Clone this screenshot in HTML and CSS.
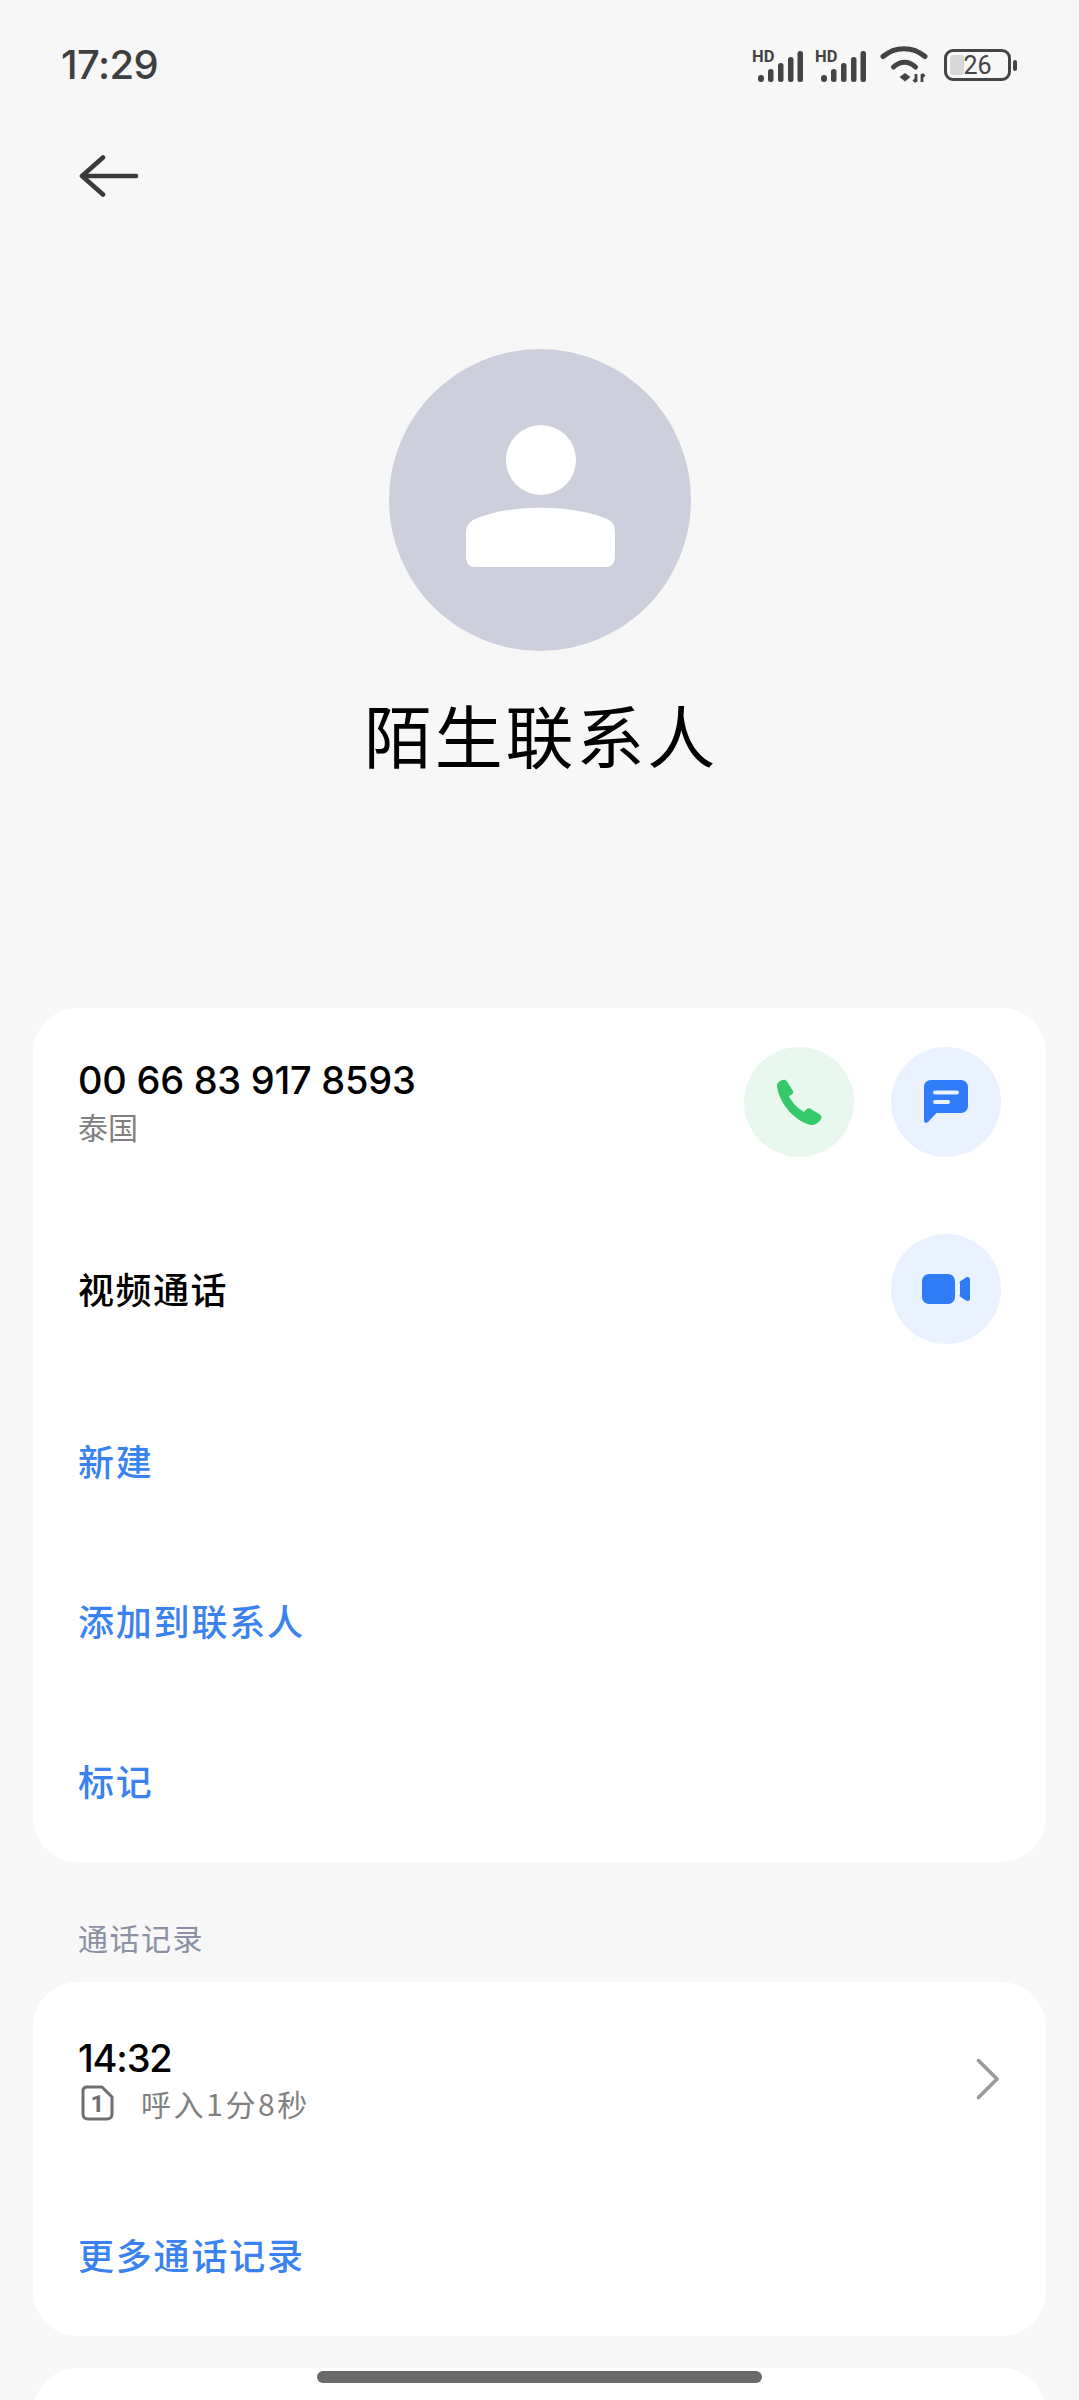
FILE: index.html
```html
<!DOCTYPE html>
<html lang="zh-CN">
<head>
<meta charset="utf-8">
<title>陌生联系人</title>
<link rel="stylesheet" href="styles.css">
</head>
<body>
<div class="page">
  <header class="status">
    <span class="clock">17:29</span>
    <div class="status-icons">
      <svg class="ic-signal" viewBox="0 -5 51 37" width="51" height="37">
        <text x="0" y="11.500" class="hd">HD</text>
        <g fill="#444"><rect x="6" y="25" width="6" height="7" rx="3"/><rect x="16" y="19" width="5.500" height="13" rx="2.500"/><rect x="26" y="13" width="5.500" height="19" rx="2.500"/><rect x="36" y="7" width="5.500" height="25" rx="2.500"/><rect x="45.500" y="1" width="5.500" height="31" rx="2.500"/></g>
      </svg>
      <svg class="ic-signal" viewBox="0 -5 51 37" width="51" height="37">
        <text x="0" y="11.500" class="hd">HD</text>
        <g fill="#444"><rect x="6" y="25" width="6" height="7" rx="3"/><rect x="16" y="19" width="5.500" height="13" rx="2.500"/><rect x="26" y="13" width="5.500" height="19" rx="2.500"/><rect x="36" y="7" width="5.500" height="25" rx="2.500"/><rect x="45.500" y="1" width="5.500" height="31" rx="2.500"/></g>
      </svg>
      <svg class="ic-wifi" viewBox="0 0 49 38" width="49" height="38">
        <g fill="none" stroke="#444" stroke-width="5" stroke-linecap="round">
          <path d="M3 11.500C15 1 33 1 45 11.500"/>
          <path d="M13.500 22C20 15.500 29 15.500 35.500 22"/>
        </g>
        <path d="M25 28l5.500 4-5.500 4.500-5.500-4.500z" fill="#444"/>
        <path d="M36 29v8M36 37l-2.500-2.500M42 37v-8M42 29l2.500 2.500" fill="none" stroke="#444" stroke-width="2.800"/>
      </svg>
      <div class="battery">
        <div class="batt-body"><span class="batt-fill"></span><span class="batt-num">26</span></div>
        <span class="batt-nub"></span>
      </div>
    </div>
  </header>

  <div class="nav">
    <svg viewBox="0 0 60 42" width="60" height="42">
      <path d="M3 21H57M24 2.500L3 21l21 18.500" fill="none" stroke="#3a3a3a" stroke-width="4.600" stroke-linecap="round" stroke-linejoin="round"/>
    </svg>
  </div>

  <section class="hero">
    <div class="avatar">
      <svg viewBox="0 0 150 150" width="150" height="150">
        <circle cx="76" cy="35" r="35" fill="#fff"/>
        <path d="M1 108C1 101 4 97 10 94 45 79 107 79 142 94 148 97 150 101 150 108V131C150 138 147 142 141 142H10C4 142 1 138 1 131Z" fill="#fff"/>
      </svg>
    </div>
    <h1 class="name">陌生联系人</h1>
  </section>

  <section class="card card-main">
    <div class="row row-phone">
      <div class="stack">
        <span class="primary num">00 66 83 917 8593</span>
        <span class="secondary">泰国</span>
      </div>
      <div class="actions">
        <span class="circle green">
          <svg viewBox="0 0 46 46" width="46" height="46"><path d="M1 7C.5 3.500 6 0 9.500 1L11 2.500 17 12C18 14 16 16 13 17C15 22 21 29 28 33C30 30 32 28.500 34 29.500L44 35.500C46 37 46 39.500 44 41.500C42 44 39 46 35 46C20 43 3 25 1 7Z" fill="#35c96a"/></svg>
        </span>
        <span class="circle blue">
          <svg viewBox="0 0 44 44" width="44" height="44"><path d="M7 0H37C41 0 44 3 44 7V26C44 30 41 33 37 33H12.500L4 42C2.500 43.500 0 42.800 0 40.500V7C0 3 3 0 7 0Z" fill="#2f7bf8"/><path d="M11 12.500H33M11 22H24" stroke="#e9f2fe" stroke-width="4" stroke-linecap="round"/></svg>
        </span>
      </div>
    </div>
    <div class="row row-video">
      <span class="primary zh">视频通话</span>
      <span class="circle blue">
        <svg viewBox="0 0 48 30" width="48" height="30"><rect x="0" y="0" width="33" height="30" rx="7" fill="#2f7bf8"/><path d="M38 7.500L44 3.500C45.500 2.500 48 3 48 5.500V24.500C48 27 45.500 27.500 44 26.500L38 22.500C37 21.800 38 21 38 20V10C38 9 37 8.200 38 7.500Z" fill="#2f7bf8"/></svg>
      </span>
    </div>
    <div class="row row-link"><a class="link">新建</a></div>
    <div class="row row-link"><a class="link">添加到联系人</a></div>
    <div class="row row-link"><a class="link">标记</a></div>
  </section>

  <h2 class="section-label">通话记录</h2>

  <section class="card card-log">
    <div class="row row-log">
      <div class="stack">
        <span class="primary time">14:32</span>
        <span class="log-meta">
          <svg viewBox="0 0 33 36" width="33" height="36"><path d="M6 2H21L31 12V29C31 32 29 34 26 34H7C4 34 2 32 2 29V6C2 3.500 3.500 2 6 2Z" fill="none" stroke="#6e6e6e" stroke-width="3" stroke-linejoin="round"/><text x="16.500" y="27" class="sim">1</text></svg>
          <span class="secondary">呼入1分8秒</span>
        </span>
      </div>
      <svg class="chev" viewBox="0 0 24 42" width="24" height="42"><path d="M2.500 2.500L21 21 2.500 39.500" fill="none" stroke="#999" stroke-width="3.600" stroke-linecap="round" stroke-linejoin="round"/></svg>
    </div>
    <div class="row row-link"><a class="link">更多通话记录</a></div>
  </section>

  <section class="card card-next"></section>

  <div class="home-bar"></div>
</div>
</body>
</html>
```

FILE: styles.css
```css
* { box-sizing: border-box; }
html, body { margin: 0; padding: 0; }
body { background: #f7f7f7; font-family: Inter, "Noto Sans CJK SC", sans-serif; }
.page { position: relative; width: 1079px; height: 2400px; overflow: hidden; background: #f7f7f7; }

.status { height: 100px; padding: 30px 62px 0 61px; display: flex; justify-content: space-between; align-items: center; }
.clock { font-size: 40px; font-weight: 500; color: #3f3f3f; letter-spacing: -.6px; line-height: 48px; }
.status-icons { display: flex; align-items: center; gap: 12px; }
.ic-signal { margin-bottom: 3px; }
.hd { font: 700 16.500px Roboto, sans-serif; fill: #444; }
.ic-wifi { margin: 0 3px 2px 2px; }
.battery { display: flex; align-items: center; gap: 2px; }
.batt-body { position: relative; width: 67px; height: 32px; border: 3.500px solid #444; border-radius: 9px; display: flex; align-items: center; justify-content: center; }
.batt-fill { position: absolute; left: 3px; top: 3px; bottom: 3px; width: 14px; background: #d8d8d8; border-radius: 3px; }
.batt-num { position: relative; font: 400 25px/25px Roboto, sans-serif; color: #444; }
.batt-nub { width: 4px; height: 11px; background: #444; border-radius: 2px; }

.nav { height: 152px; padding-left: 79px; display: flex; align-items: center; }

.hero { display: flex; flex-direction: column; align-items: center; padding-top: 97px; height: 756px; }
.avatar { width: 302px; height: 302px; border-radius: 50%; background: #cdcfdd; display: flex; align-items: center; justify-content: center; }
.name { margin: 35px 0 0; padding-left: 3px; font: 400 68px/96px "Noto Sans CJK SC", sans-serif; letter-spacing: 2.800px; color: #000; }

.card { margin: 0 33px; background: #fff; border-radius: 45px; }
.row { display: flex; align-items: center; justify-content: space-between; padding: 0 45px 0 45px; }
.row-phone { height: 188px; }
.row-video { height: 186px; }
.row-link { height: 160px; padding-bottom: 4px; }
.row-log { height: 194px; }
.card-main { height: 854px; }
.card-log { height: 354px; }
.card-next { margin-top: 32px; height: 100px; }

.stack { display: flex; flex-direction: column; }
.primary { color: #000; }
.num { font-size: 38px; line-height: 45px; margin-bottom: 3px; font-weight: 500; letter-spacing: -.25px; }
.zh { font: 500 36px/48px "Noto Sans CJK SC", sans-serif; letter-spacing: 1.500px; padding-bottom: 3px; }
.time { font-size: 38px; line-height: 45px; margin-bottom: 2px; font-weight: 500; letter-spacing: -1.200px; }
.secondary { font: 400 30px/40px "Noto Sans CJK SC", sans-serif; color: #808080; }
.actions { display: flex; gap: 37px; }
.circle { width: 110px; height: 110px; border-radius: 50%; display: flex; align-items: center; justify-content: center; }
.green { background: #e9f8ef; }
.blue { background: #e9f2fe; }
.link { font: 500 36px/48px "Noto Sans CJK SC", sans-serif; letter-spacing: 1.800px; color: #3a82f0; }
.section-label { margin: 0; height: 120px; padding: 57px 0 0 78px; font: 400 30px/36px "Noto Sans CJK SC", sans-serif; color: #8c90a3; letter-spacing: 1.500px; }
.log-meta { display: flex; align-items: center; gap: 27px; padding-left: 3px; }
.log-meta .secondary { letter-spacing: 2.600px; }
.sim { font: 700 24px Roboto, sans-serif; fill: #6e6e6e; text-anchor: middle; }
.chev { margin-right: 1px; }

.home-bar { position: absolute; left: 317px; top: 2371px; width: 445px; height: 12px; border-radius: 6px; background: #6a6a6a; }
```
